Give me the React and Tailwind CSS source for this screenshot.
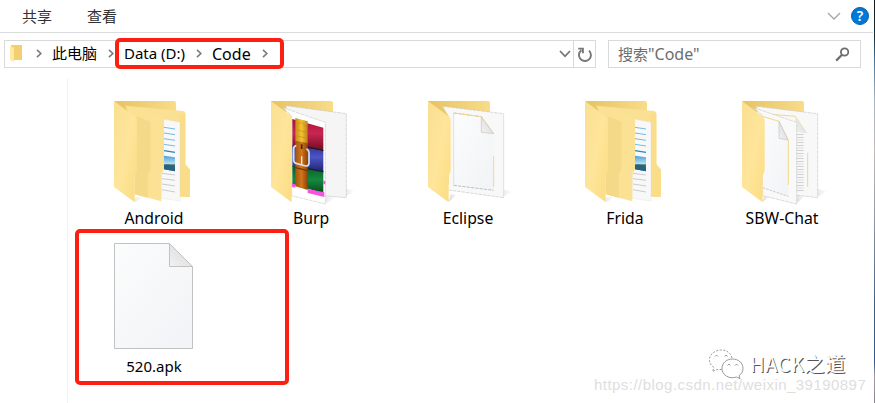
const UI = "font-['Noto_Sans','Noto_Sans_CJK_SC',sans-serif]";

function Chevron() {
  return (
    <svg className="block h-[9px] w-[6px] shrink-0" viewBox="0 0 6 9" fill="none" stroke="#7d7d7d" strokeWidth="1.7">
      <path d="M1 .8 4.8 4.5 1 8.2" />
    </svg>
  );
}

function Defs() {
  return (
    <svg className="absolute h-0 w-0">
      <defs>
        <linearGradient id="flap" x1="0" y1="0" x2="1" y2="1">
          <stop offset="0" stopColor="#fadf91" />
          <stop offset=".5" stopColor="#fee59a" />
          <stop offset="1" stopColor="#fcdc82" />
        </linearGradient>
        <linearGradient id="back" x1="0" y1="0" x2="1" y2="0">
          <stop offset="0" stopColor="#e6c363" />
          <stop offset="1" stopColor="#f8dc89" />
        </linearGradient>
        <linearGradient id="sheet" x1="0" y1="0" x2="1" y2="1">
          <stop offset="0" stopColor="#fbfcfc" />
          <stop offset="1" stopColor="#f2f3f6" />
        </linearGradient>
        <linearGradient id="fold" x1="0" y1="1" x2="1" y2="0">
          <stop offset="0" stopColor="#f2f2f2" />
          <stop offset="1" stopColor="#d6d6d6" />
        </linearGradient>
        <linearGradient id="shade" x1="0" y1="0" x2="1" y2="0">
          <stop offset="0" stopColor="#c8c8c8" />
          <stop offset="1" stopColor="#ffffff" />
        </linearGradient>
        <linearGradient id="gold" x1="0" y1="0" x2="1" y2="0">
          <stop offset="0" stopColor="#c98a14" />
          <stop offset=".5" stopColor="#f2c331" />
          <stop offset="1" stopColor="#c0821a" />
        </linearGradient>
        <linearGradient id="leather" x1="0" y1="0" x2="1" y2="0">
          <stop offset="0" stopColor="#a4540c" />
          <stop offset=".5" stopColor="#d0761c" />
          <stop offset="1" stopColor="#8f4409" />
        </linearGradient>
        <linearGradient id="red" x1="0" y1="0" x2="0" y2="1">
          <stop offset="0" stopColor="#a3143a" />
          <stop offset=".45" stopColor="#c92650" />
          <stop offset="1" stopColor="#6d0b20" />
        </linearGradient>
        <linearGradient id="blue" x1="0" y1="0" x2="0" y2="1">
          <stop offset="0" stopColor="#2f3596" />
          <stop offset=".45" stopColor="#4b55c4" />
          <stop offset="1" stopColor="#1f2270" />
        </linearGradient>
        <linearGradient id="green" x1="0" y1="0" x2="0" y2="1">
          <stop offset="0" stopColor="#0b5a25" />
          <stop offset=".5" stopColor="#158a3f" />
          <stop offset="1" stopColor="#07491b" />
        </linearGradient>
        <linearGradient id="photo" x1="0" y1="0" x2="0" y2="1">
          <stop offset="0" stopColor="#4a9fdc" />
          <stop offset=".5" stopColor="#b5dcf2" />
          <stop offset=".6" stopColor="#3d6a55" />
          <stop offset="1" stopColor="#2c78a8" />
        </linearGradient>
      </defs>
    </svg>
  );
}

// All folder drawings share one 240 x 320 grid, with the front flap at the left edge.
function Flap() {
  return <path d="M0 0 63 47Q68 51 68 58V210L62 224V304L0 258Z" fill="url(#flap)" />;
}

function BackPanel() {
  return <path d="M0 0H180Q186 0 186 6V270L60 250Z" fill="url(#back)" />;
}

function Shadow({ x, y }) {
  return <path d={`M${x} ${y}L${x + 32} ${y - 18}L${x} ${y - 26}Z`} fill="url(#shade)" opacity=".4" />;
}

function DocsFolder() {
  return (
    <>
      <path d="M60 290 92 286 64 304Z" fill="url(#shade)" opacity=".4" />
      <path d="M0 0H180Q186 0 186 6V60H60Z" fill="url(#back)" />
      <path d="M34 14 208 30Q214 31 214 37V190L228 206V284Q228 289 222 288L140 284Z" fill="#fae092" />
      <path d="M214 37V190L228 206V284Q228 289 222 288L196 286V40Z" fill="#f9dd89" />
      <path d="M146 54 198 64V300L140 292Z" fill="#f8f8f9" stroke="#e0dfdc" />
      <path d="M150 79 183 84M150 96 183 101M150 113 183 118M150 130 183 135" stroke="#58afe0" strokeWidth="2.5" />
      <path d="M150 149 183 154" stroke="#1d8bcb" strokeWidth="4" />
      <path d="M150 164 183 169V211L150 205Z" fill="url(#photo)" />
      <path d="M150 193Q165 186 183 201V211L150 205Z" fill="#286283" />
      <path d="M144 217 183 222M144 233 183 238M144 249 183 255M144 266 183 273" stroke="#bec2c5" strokeWidth="2.5" />
      <path d="M34 14 144 42Q150 44 150 50V204L142 218V301L62 280V50Z" fill="#fae193" />
      <path d="M68 46 109 62V204L101 222V290L62 280V224L68 210Z" fill="#f4d988" />
      <Flap />
    </>
  );
}

function ArchiveFolder() {
  return (
    <>
      <Shadow x={220} y={288} />
      <Shadow x={163} y={308} />
      <BackPanel />
      <path d="M46 14 226 38V290L158 284 46 240Z" fill="#f5f5f6" />
      <path d="M46 14 226 38V290L158 284" fill="none" stroke="#c8c8c8" strokeWidth="2" strokeDasharray="12 2" />
      <path d="M35 20 163 64V309L62 284V44Z" fill="#fff" stroke="#cccccc" strokeWidth="2" strokeDasharray="12 2" />
      <path d="M64 54 157 80V150L64 137Z" fill="url(#red)" />
      <path d="M64 133 157 150V212L64 197Z" fill="url(#blue)" />
      <path d="M64 195 157 210V277L64 250Z" fill="url(#green)" />
      <path d="M110 138 157 149M110 203 157 212" stroke="#191b3d" strokeWidth="4" />
      <path d="M73 51 110 61V130L73 122Z" fill="url(#gold)" />
      <path d="M79 72Q90 54 104 78M79 87 104 94M79 105 104 111" stroke="#a87312" strokeWidth="2" fill="none" opacity=".6" />
      <path d="M73 119 110 126V267L73 256Z" fill="url(#leather)" />
      <path d="M73 200 110 209" stroke="#743505" strokeWidth="4" />
      <path d="M92 130v14" stroke="#4b2305" strokeWidth="5" />
      <path d="M76 134Q68 135 68 144V178Q69 186 78 188L104 195Q113 196 114 187V155Q113 146 106 144" fill="none" stroke="#dce0e6" strokeWidth="5" />
      <path d="M92 166v24" stroke="#e8eaed" strokeWidth="4" />
      <path d="M62 247 73 250V260L62 257ZM110 264 160 274V288L110 276ZM157 238 163 241V251L157 248Z" fill="#f553e2" />
      <path d="M0 0 62 46V304L0 258Z" fill="url(#flap)" />
    </>
  );
}

function SheetFolder() {
  return (
    <>
      <path d="M220 290 256 271 228 266Z" fill="url(#shade)" opacity=".4" />
      <path d="M62 302 88 282 68 280Z" fill="url(#shade)" opacity=".7" />
      <BackPanel />
      <path d="M44 16 227 38V290L62 267V46Z" fill="#f8f8f9" />
      <path d="M44 16 227 38M62 267 227 290" stroke="#c6c6c6" strokeWidth="2" strokeDasharray="10 3" />
      <path d="M227 38V290" stroke="#d4d4d4" strokeWidth="2" />
      <path d="M77 36 160 47 197 98V268L77 253Z" fill="url(#sheet)" />
      <path d="M77 36V253" stroke="#d6d6d6" strokeWidth="2" />
      <path d="M77 36 160 47M77 253 197 268" stroke="#b4b4b4" strokeWidth="2.5" strokeDasharray="10 3" />
      <path d="M79 36 160 47 197 98M197 165V258" stroke="#f4d889" strokeWidth="3" fill="none" />
      <path d="M160 47 197 98 160 94Z" fill="url(#fold)" stroke="#c6c6c6" strokeWidth="2" />
      <Flap />
    </>
  );
}

function TwoSheetFolder() {
  return (
    <>
      <Shadow x={225} y={289} />
      <path d="M162 309 190 285 165 280Z" fill="url(#shade)" opacity=".6" />
      <path d="M62 302 88 282 68 280Z" fill="url(#shade)" opacity=".7" />
      <BackPanel />
      <path d="M44 16 227 38V290L160 282 62 240Z" fill="#f8f8f9" />
      <path d="M44 16 227 38V290L160 282" fill="none" stroke="#cccccc" strokeWidth="2" strokeDasharray="12 2" />
      <path d="M85 40 160 46 194 97M197 155V258" stroke="#f4d889" strokeWidth="3" fill="none" />
      <path d="M160 46 194 97 160 92Z" fill="url(#fold)" />
      <path d="M174 100V272" stroke="#a5a7ab" strokeWidth="22" strokeDasharray="2 6" opacity=".65" />
      <path d="M35 20 164 64V309L62 284V44Z" fill="#f9f9fa" stroke="#cccccc" strokeWidth="2" strokeDasharray="12 2" />
      <path d="M54 44 111 61 139 118V286L62 262V44Z" fill="url(#sheet)" />
      <path d="M54 44 111 61 139 118V252" stroke="#f4d889" strokeWidth="3" fill="none" />
      <path d="M62 260 139 286" stroke="#b5b5b5" strokeWidth="2" strokeDasharray="8 3" />
      <path d="M111 61 138 117 111 112Z" fill="url(#fold)" stroke="#c6c6c6" strokeWidth="2" />
      <Flap />
    </>
  );
}

const folders = [
  { name: "Android", Art: DocsFolder },
  { name: "Burp", Art: ArchiveFolder },
  { name: "Eclipse", Art: SheetFolder },
  { name: "Frida", Art: DocsFolder },
  { name: "SBW-Chat", Art: TwoSheetFolder },
];

function Ribbon() {
  return (
    <div className="flex h-[33px] w-[873px] items-center border-b border-[#dadbdc] pl-[22px] text-[15px] text-[#333]">
      <span className="w-[65px]">共享</span>
      <span>查看</span>
      <svg className="ml-auto h-2 w-[14px]" viewBox="0 0 14 8" fill="none" stroke="#a5a5a5" strokeWidth="1.3">
        <path d="M1 1 7 7 13 1" />
      </svg>
      <span className="mr-[4px] ml-[10px] flex size-[18px] items-center justify-center rounded-full border border-[#0560b0] bg-[#0078d7] text-[14px] leading-none font-semibold text-white">?</span>
    </div>
  );
}

function AddressRow() {
  return (
    <div className="mt-[7px] ml-1 flex h-7 gap-3 text-[15px] text-black">
      <div className="flex w-[592px] items-center border border-[#d9d9d9]">
        <svg className="mb-[2px] ml-[5px] h-[17px] w-3 shrink-0" viewBox="0 0 12 17">
          <path d="M1 0H12V15H3Z" fill="#f3cf70" />
          <path d="M0 1 4 3V17L0 15Z" fill="#ffe9a6" />
        </svg>
        <div className="mb-[2px] flex w-[80px] items-center">
          <span className="ml-[14px]"><Chevron /></span>
          <span className="ml-[10px] w-[46px] whitespace-nowrap">此电脑</span>
        </div>
        <span className="mb-[2px] ml-[6px]"><Chevron /></span>
        <div className="-mt-[3px] ml-px flex h-[31px] w-[169px] shrink-0 items-center self-start rounded-[5px] border-4 border-[#fd2012]">
          <span className="ml-[5px] w-[63px] whitespace-nowrap">Data (D:)</span>
          <span className="ml-[9px]"><Chevron /></span>
          <span className="ml-[10px] w-[40px] text-[16px]">Code</span>
          <span className="ml-[10px]"><Chevron /></span>
        </div>
        <svg className="mr-[2px] ml-auto h-2 w-3" viewBox="0 0 12 8" fill="none" stroke="#767676" strokeWidth="1.8">
          <path d="M1 1 6 6.3 11 1" />
        </svg>
        <div className="flex h-full w-[22px] items-center justify-center border-l border-[#d9d9d9]">
          <svg className="h-[15px] w-[15px]" viewBox="0 0 15 15" fill="none" stroke="#767676" strokeWidth="1.9">
            <path d="M4.400 3.200A6 6 0 1 0 12 3.600M1.200 1.600H5.900V6.300" />
          </svg>
        </div>
      </div>
      <div className="flex w-[253px] items-center justify-between border border-[#d9d9d9] pr-[10px] pl-[9px] text-[#6d6d6d]">
        <span>搜索<span className="text-[16px]">"Code"</span></span>
        <svg className="size-[15px]" viewBox="0 0 15 15" fill="none" stroke="#6d6d6d" strokeWidth="1.8">
          <circle cx="9.6" cy="5" r="3.7" />
          <path d="M7 7.8 1.2 13.6" strokeWidth="2.2" />
        </svg>
      </div>
    </div>
  );
}

function FolderItem({ name, Art }) {
  return (
    <div className="flex w-[157px] flex-col items-center">
      <svg className="h-[106px] w-[80px] overflow-visible" viewBox="0 0 240 318">
        <Art />
      </svg>
      <span className="mb-px h-[22px] pl-px text-[15.75px] leading-[22px]">{name}</span>
    </div>
  );
}

function Watermark() {
  return (
    <div className="absolute top-[346px] left-[594px] w-[276px]">
      <div className="flex items-center pl-[115px]">
        <svg className="h-[32px] w-[36px]" viewBox="0 0 36 32" fill="none" stroke="#808080" strokeWidth=".8">
          <path d="M23 10C22 5 17 1.500 11.500 2 5 2.500 0 7 .5 12.500c.2 3 2 5.500 4.500 7L3.500 23.500 8 21.500h5" strokeDasharray="2 1.500" />
          <path d="M13 20.500c0-5.500 4.500-9.500 10.500-9.500S34 15 34 20.500c0 3-1.500 5.500-4 7.200l1 3-3.500-1.700C20 31.500 13 27 13 20.500Z" fill="#fff" />
          <path d="M6 8.500 7.500 7 9 8.500M15.500 8.500 17 7l1.500 1.500M18.500 17.500 20 16l1.500 1.500M26 17.500l1.500-1.500 1.500 1.500" />
        </svg>
        <span className="ml-[5px] text-[20px] leading-[36px] tracking-[0.6px] whitespace-nowrap text-white [text-shadow:1px_1px_0_#555] font-['Noto_Sans_CJK_SC',sans-serif]">HACK之道</span>
      </div>
      <div className="-mt-[6px] text-[15px] leading-[18px] tracking-[0.46px] whitespace-nowrap text-[#dedede] font-['Liberation_Sans',sans-serif]">https://blog.csdn.net/weixin_39190897</div>
    </div>
  );
}

export default function App() {
  return (
    <div className={`relative flex h-[403px] w-[875px] overflow-hidden bg-white ${UI}`}>
      <Defs />
      <div className="w-[874px]">
        <Ribbon />
        <AddressRow />
        <main className="mt-[10px] ml-[67px] h-[325px] border-l border-[#f3f3f3] pt-[23px] text-[15px] text-black">
          <div className="ml-[7px] flex">
            {folders.map((f) => (
              <FolderItem key={f.name} {...f} />
            ))}
          </div>
          <div className="-mt-px ml-[7px] flex h-[156px] w-[214px] rounded-[5px] border-4 border-[#fd2012]">
            <div className="flex w-[149px] flex-col items-center pt-[9px]">
              <svg className="h-[108px] w-[80px]" viewBox="0 0 80 108">
                <path d="M.5 1.500H55.500L78.500 24.500V106.500H.5Z" fill="url(#sheet)" stroke="#c2c2c2" />
                <path d="M55.500 1.500 78.500 24.500H55.500Z" fill="url(#fold)" stroke="#c2c2c2" />
              </svg>
              <span className="mt-[5px] pl-px leading-[22px]">520.apk</span>
            </div>
          </div>
        </main>
      </div>
      <div className="w-px bg-[linear-gradient(to_bottom,#0b1a1c_0%,#16303a_9%,#3c6f96_14%,#a8b8c4_25%,#c4bab8_38%,#8d96a0_55%,#3f6187_75%,#34598a_90%,#a39aa4_93%,#8c8592_100%)]" />
      <Watermark />
    </div>
  );
}
